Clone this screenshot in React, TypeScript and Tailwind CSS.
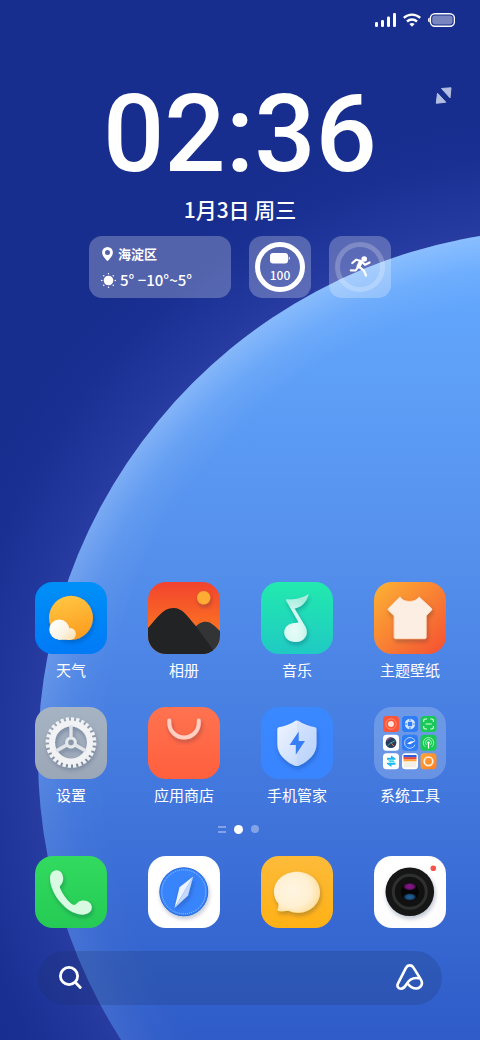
import type { ReactNode } from "react";

function Wallpaper() {
  return (
    <svg
      className="absolute inset-0 -z-10 h-full w-full"
      viewBox="0 0 480 1040"
      preserveAspectRatio="xMidYMid slice"
      aria-hidden="true"
    >
      <defs>
        <radialGradient id="halo" gradientUnits="userSpaceOnUse" cx="565" cy="756" r="640">
          <stop offset="0.82" stopColor="#283ca2" />
          <stop offset="0.88" stopColor="#20369b" />
          <stop offset="0.94" stopColor="#1a3092" />
          <stop offset="1" stopColor="#182e8f" />
        </radialGradient>
        <linearGradient id="planet" gradientUnits="userSpaceOnUse" x1="0" y1="250" x2="0" y2="1040">
          <stop offset="0" stopColor="#65aaff" />
          <stop offset="0.4" stopColor="#548fec" />
          <stop offset="0.7" stopColor="#4176dc" />
          <stop offset="1" stopColor="#2e5bc8" />
        </linearGradient>
        <radialGradient id="rim" gradientUnits="userSpaceOnUse" cx="565" cy="756" r="527">
          <stop offset="0.87" stopColor="#fff" stopOpacity="0" />
          <stop offset="0.94" stopColor="#fff" stopOpacity="0.08" />
          <stop offset="1" stopColor="#fff" stopOpacity="0.24" />
        </radialGradient>
        <linearGradient id="rimFade" x1="0" y1="0" x2="0" y2="1">
          <stop offset="0" stopColor="#fff" />
          <stop offset="0.4" stopColor="#fff" />
          <stop offset="0.8" stopColor="#555" />
        </linearGradient>
        <mask id="rimMask">
          <rect width="480" height="1040" fill="url(#rimFade)" />
        </mask>
      </defs>
      <rect width="480" height="1040" fill="url(#halo)" />
      <circle cx="565" cy="756" r="527" fill="url(#planet)" />
      <circle cx="565" cy="756" r="527" fill="url(#rim)" mask="url(#rimMask)" />
    </svg>
  );
}

function StatusBar() {
  return (
    <div className="flex h-10 items-center justify-end gap-[7px] pr-[25px]">
      <svg width="21" height="14" viewBox="0 0 21 14" fill="#fff" aria-label="信号">
        <rect x="0" y="9" width="3" height="5" rx="1.2" />
        <rect x="6" y="7" width="3" height="7" rx="1.2" />
        <rect x="12" y="3.5" width="3" height="10.5" rx="1.2" />
        <rect x="18" y="0" width="3" height="14" rx="1.2" />
      </svg>
      <svg width="18" height="14" viewBox="0 0 18 14" fill="none" stroke="#fff" strokeWidth="2.4" aria-label="WLAN">
        <path d="M.8 4.9a12 12 0 0 1 16.4 0M4 8.5a7.4 7.4 0 0 1 10 0" />
        <path d="M6.400 11a4 4 0 0 1 5.200 0L9 13.800z" fill="#fff" stroke="none" />
      </svg>
      <svg width="27" height="14" viewBox="0 0 27 14" fill="none" aria-label="电池">
        <path d="M1.6 4.6v4.8C.2 9 0 8 0 7s.2-2 1.6-2.4z" fill="#fff" />
        <rect x="2.4" y=".8" width="24" height="12.4" rx="4.500" stroke="#fff" strokeWidth="1.4" />
        <rect x="4.2" y="2.6" width="20.4" height="8.8" rx="2.8" fill="#fff" fillOpacity=".42" />
      </svg>
    </div>
  );
}

function Widgets() {
  return (
    <div className="flex justify-center gap-[18px]">
      <div className="flex h-[62px] w-[142px] flex-col justify-center gap-1 rounded-[13px] bg-white/25 pl-3">
        <div className="flex h-[22px] items-center gap-1 text-[13px] font-bold">
          <svg width="13" height="14" viewBox="0 0 13 14" aria-hidden="true">
            <path
              fill="#fff"
              fillRule="evenodd"
              d="M6.5 0a5.4 5.4 0 0 1 5.4 5.5c0 2.8-2.4 5.6-4.4 7.8a1.3 1.3 0 0 1-2 0C3.5 11.1 1.1 8.3 1.1 5.5A5.4 5.4 0 0 1 6.5 0zm0 3.1a2.5 2.5 0 1 0 0 5 2.5 2.5 0 0 0 0-5z"
            />
          </svg>
          <span>海淀区</span>
        </div>
        <div className="flex h-[22px] items-center gap-1 text-[15px] font-medium">
          <svg width="15" height="15" viewBox="0 0 15 15" aria-hidden="true">
            <circle cx="7.5" cy="7.5" r="4.8" fill="#fff" />
            <g stroke="#fff" strokeWidth="1.4" strokeLinecap="round">
              <path d="M7.5 .7v.1M7.5 14.2v.1M.7 7.5h.1M14.2 7.5h.1M2.7 2.7l.1 .1M12.2 12.2l.1 .1M12.2 2.7l.1 .1M2.7 12.2l.1 .1" />
            </g>
          </svg>
          <span>5° −10°~5°</span>
        </div>
      </div>
      <div className="flex size-[62px] items-center justify-center rounded-[13px] bg-white/25">
        <div className="flex size-[50px] flex-col items-center justify-center rounded-full border-5 border-white">
          <svg width="20" height="11" viewBox="0 0 20 11" fill="#fff" aria-hidden="true">
            <rect x="0" y="0" width="18" height="10.5" rx="3" />
            <path d="M18.7 3.6c.9 .3 1.1 1 1.1 1.7s-.2 1.4-1.1 1.7z" />
          </svg>
          <span className="mt-1 text-[12px] leading-[14px] font-medium">100</span>
        </div>
      </div>
      <div className="size-[62px] rounded-[13px] bg-white/25">
        <svg width="62" height="62" viewBox="0 0 62 62" fill="none" aria-label="运动">
          <circle cx="31" cy="31" r="22.5" stroke="#fff" strokeOpacity=".22" strokeWidth="5" />
          <circle cx="35.2" cy="23" r="2.8" fill="#fff" />
          <g stroke="#fff" strokeWidth="2.2" strokeLinecap="round" strokeLinejoin="round">
            <path d="M23.3 27l4-3.300 5 1.400M33 26l3 2.800 4.600-2.400" />
            <path d="M29.7 30.500l5 3.800 2.300 5.200M28.700 31.500l-2 3-4.900-.2" />
            <path d="M31.5 26.5l-2 4" strokeWidth="4" />
          </g>
        </svg>
      </div>
    </div>
  );
}

type TileProps = {
  id: string;
  from: string;
  to: string;
  diagonal?: boolean;
  children: ReactNode;
};

function Tile({ id, from, to, diagonal, children }: TileProps) {
  return (
    <svg className="size-[72px]" viewBox="0 0 72 72" aria-hidden="true">
      <defs>
        <linearGradient id={id} x1="0" y1="0" x2={diagonal ? "1" : "0"} y2="1">
          <stop offset="0" stopColor={from} />
          <stop offset="1" stopColor={to} />
        </linearGradient>
        <clipPath id={`${id}-clip`}>
          <rect width="72" height="72" rx="18" />
        </clipPath>
        <filter id={`${id}-shadow`} x="-30%" y="-30%" width="160%" height="170%">
          <feDropShadow dx="1" dy="2.5" stdDeviation="2" floodColor="#00204a" floodOpacity="0.28" />
        </filter>
      </defs>
      <g clipPath={`url(#${id}-clip)`}>
        <rect width="72" height="72" fill={`url(#${id})`} />
        {children}
      </g>
    </svg>
  );
}

function WeatherIcon() {
  return (
    <Tile id="weather" from="#0090f8" to="#007af6">
      <defs>
        <linearGradient id="sun" x1="0" y1="0" x2=".3" y2="1">
          <stop offset="0" stopColor="#ffca44" />
          <stop offset="1" stopColor="#fd9f22" />
        </linearGradient>
        <linearGradient id="cloud" gradientUnits="userSpaceOnUse" x1="18" y1="38" x2="40" y2="60">
          <stop offset="0" stopColor="#fff" />
          <stop offset=".5" stopColor="#fbf4e6" />
          <stop offset="1" stopColor="#fbdca4" />
        </linearGradient>
      </defs>
      <circle cx="36" cy="35.8" r="22" fill="url(#sun)" filter="url(#weather-shadow)" />
      <g fill="url(#cloud)">
        <circle cx="24.3" cy="47.6" r="10" />
        <circle cx="35" cy="52" r="5.9" />
        <rect x="23" y="48" width="12" height="9.8" />
      </g>
    </Tile>
  );
}

function PhotosIcon() {
  return (
    <Tile id="photos" from="#f2432f" to="#ff8a1a">
      <circle cx="55.7" cy="15.7" r="6.7" fill="#ffac35" filter="url(#photos-shadow)" />
      <path d="M46 46c5-5 8-6.300 12-6.300S66 43 72 49v23H40z" fill="#333435" />
      <path d="M-1 47C8 38 14 26 25.3 26 35 26 39 34 47 43l22 30H-1z" fill="#222325" />
    </Tile>
  );
}

function MusicIcon() {
  return (
    <Tile id="music" from="#22eaae" to="#1fcac3">
      <defs>
        <radialGradient id="note" cx=".4" cy=".75" r=".7">
          <stop offset="0" stopColor="#e8fcf8" />
          <stop offset=".5" stopColor="#d5f8f1" />
          <stop offset="1" stopColor="#a6eddd" />
        </radialGradient>
      </defs>
      <path
        d="M26 17.300C35 18 42 15.500 47.800 12 45.500 20 41 25 33.500 26.600L44.600 45c2 4 1.600 7.500-.2 10-2 3.200-5.500 5-9.700 5C28 60 23.200 56 23.200 50.500S28 41 34 41c1.700 0 2.800-.3 3.500-1L25 18.600q-.6-1.300 1-1.300z"
        fill="url(#note)"
        filter="url(#music-shadow)"
      />
    </Tile>
  );
}

function ThemeIcon() {
  return (
    <Tile id="theme" from="#fcb334" to="#f54f32" diagonal>
      <path
        d="M26 14.900C29 21 42 21 45 14.900L57.300 26.300q.9 1 .1 1.900l-5.300 5.600v21.400q0 1.400-1.400 1.400H21.600q-1.400 0-1.400-1.400V33.800l-5.700-5.600q-.9-1 .1-1.900z"
        fill="#fdeee4"
        stroke="#ffe1cb"
        strokeWidth="1"
        strokeLinejoin="round"
        filter="url(#theme-shadow)"
      />
    </Tile>
  );
}

function SettingsIcon() {
  return (
    <Tile id="settings" from="#a5b3c2" to="#9ba7b7">
      <g fill="none" stroke="#f1f2f4" filter="url(#settings-shadow)">
        <circle cx="36" cy="35.5" r="23.3" strokeWidth="4" pathLength="56" strokeDasharray="1.2 .8" />
        <circle cx="36" cy="35.5" r="19" strokeWidth="6" />
        <circle cx="36" cy="35.5" r="4.4" strokeWidth="3" stroke="#e6e9ed" />
        <path d="M36 30.500V18M31.700 38L21 44M40.300 38L51 44" strokeWidth="3.2" stroke="#e1e4e9" />
      </g>
    </Tile>
  );
}

function StoreIcon() {
  return (
    <Tile id="store" from="#ff7350" to="#ff5f3d">
      <path
        d="M21.300 13.500v2.500a14.700 14.500 0 0 0 29.500 0v-2.500"
        fill="none"
        stroke="#ffcfc4"
        strokeWidth="4"
        strokeLinecap="round"
        filter="url(#store-shadow)"
      />
    </Tile>
  );
}

function SecurityIcon() {
  return (
    <Tile id="security" from="#3a88ff" to="#3984ff">
      <defs>
        <linearGradient id="shield" x1="0" y1="0" x2="1" y2="1">
          <stop offset="0" stopColor="#f1f6ff" />
          <stop offset="1" stopColor="#bcd3fc" />
        </linearGradient>
      </defs>
      <path
        d="M34.400 13.800q1.400-.6 2.800 0C42 17 48 19.300 54 20.200q1.500.3 1.500 2V37c0 10-8 17.500-17.800 21.700q-1.900.8-3.800 0C24 54.500 16.300 47 16.300 37V22.200q0-1.700 1.500-2C24 19.300 30 17 34.400 13.800z"
        fill="url(#shield)"
        filter="url(#security-shadow)"
      />
      <path d="M36 13.500c6 3.500 12 5.800 19.500 7V37C55.500 48 46 56 36 59.200z" fill="#8db5fb" fillOpacity=".14" />
      <path d="M37.700 24.500L28.600 38h6.200v9.800L44 34h-6.300z" fill="#377ff3" />
    </Tile>
  );
}

function ToolsIcon() {
  return (
    <svg className="size-[72px]" viewBox="0 0 72 72" fill="none" aria-hidden="true">
      <defs>
        <linearGradient id="recorder" x1="0" y1="0" x2="1" y2="1">
          <stop stopColor="#ffa63a" />
          <stop offset="1" stopColor="#fb7e24" />
        </linearGradient>
      </defs>
      <rect width="72" height="72" rx="18" fill="#fff" fillOpacity=".2" />

      <rect x="9" y="9" width="16" height="16" rx="3.5" fill="#fd5538" />
      <circle cx="17" cy="17" r="5.2" stroke="#ff9b83" strokeWidth=".8" />
      <circle cx="17" cy="17" r="3" fill="#ffe2da" />

      <rect x="28" y="9" width="16" height="16" rx="3.5" fill="#2f7df5" />
      <circle cx="36" cy="17" r="5.2" fill="#d5e6ff" />
      <rect x="33.8" y="14.8" width="4.400" height="4.400" rx="1" fill="#2f7df5" />
      <path d="M36 11.800v2.200M36 20v2.200M30.800 17h2.200M39 17h2.200" stroke="#2f7df5" strokeWidth="1" />

      <rect x="46.5" y="9" width="16" height="16" rx="3.5" fill="#18ca55" />
      <path
        d="M49.700 15v-1.500q0-1.500 1.500-1.500H53M56.300 12h1.600q1.500 0 1.500 1.500V15M59.400 19v1.500q0 1.500-1.500 1.500h-1.600M53 22h-1.800q-1.500 0-1.500-1.500V19M51.500 17h6.200"
        stroke="#d9ffe6"
        strokeWidth="1.2"
      />

      <rect x="9" y="27.7" width="16" height="16" rx="3.5" fill="#fff" />
      <circle cx="17" cy="35.7" r="5.4" fill="#293c5e" />
      <path d="M12.800 33.500a5 5 0 0 1 4-2.700" stroke="#8f4d8c" strokeWidth="1.5" />
      <path d="M17 35.700l4.200-2M17 35.700l-3.500 3" stroke="#3aa7a0" />
      <path d="M17 35.700l3 3.600" stroke="#e2713e" />

      <rect x="28" y="27.7" width="16" height="16" rx="3.5" fill="#2f7df5" />
      <path d="M41 34a5.400 5.400 0 1 0 0 3.800" stroke="#b9d5ff" />
      <path d="M33 36.500l3 .8 5.500-3.400-5 .7z" fill="#fff" />

      <rect x="46.5" y="27.7" width="16" height="16" rx="3.5" fill="#18ca55" />
      <path d="M51.300 39.900a5.200 5.200 0 1 1 6.400 0M52.600 37.900a3 3 0 1 1 3.800 0" stroke="#b5f5c9" strokeWidth=".9" />
      <circle cx="54.5" cy="35.6" r="1.2" fill="#fff" />
      <path d="M54.500 36V41.500" stroke="#fff" strokeWidth="1.2" />

      <rect x="9" y="46.3" width="16" height="16" rx="3.5" fill="#fff" />
      <path d="M17 48.500l4.500 3v1.300h-8.500v-2h4zM17.500 60l-4.500-3v-1.300h8.500v2h-4z" fill="#18b9f3" />
      <path d="M14 53.200h5.500l1.500 2h-5.500z" fill="#42dbe3" />

      <rect x="28" y="46.3" width="16" height="16" rx="3.5" fill="#fff" />
      <path d="M29.500 48h13v2.500h-13z" fill="#315dd8" />
      <path d="M29.500 50.200h13v2.300h-13z" fill="#ee4434" />
      <path d="M29.500 52.500h13v2h-13z" fill="#ffa52d" />
      <path d="M29.500 54.500h13v6h-13z" fill="#f4efe5" />

      <rect x="46.5" y="46.3" width="16" height="16" rx="3.5" fill="url(#recorder)" />
      <circle cx="54.5" cy="54.3" r="4.3" stroke="#fff1df" strokeWidth="1.7" />
    </svg>
  );
}

function PhoneIcon() {
  return (
    <Tile id="phone" from="#32da5f" to="#25cb54">
      <path
        d="M21.500 14.200c-4 0-6.700 3.600-6.500 8.300.3 8 4.500 17 10.300 23.600C31 52.800 38 57.700 45.500 58.600c6.500.6 11.300-2.400 11.300-7 0-4-3.500-7-8.300-7-4.500 0-6 2.400-7.600 3.700-1.700 1.300-3.200.8-5-.7-4.600-4-8.300-9.600-10.500-14.500-.9-2-.7-3 .3-4.100 1.500-1.700 2.600-3.800 2.400-7.300-.2-4.500-2.900-7.500-6.600-7.500z"
        fill="#d9fae2"
        filter="url(#phone-shadow)"
      />
    </Tile>
  );
}

function BrowserIcon() {
  return (
    <Tile id="browser" from="#ffffff" to="#ffffff">
      <circle cx="35.8" cy="35.8" r="24.3" fill="#3784fa" filter="url(#browser-shadow)" />
      <circle cx="35.8" cy="35.8" r="24" fill="none" stroke="#2a67d3" strokeWidth=".8" />
      <circle cx="35.8" cy="35.8" r="22" fill="none" stroke="#b9d5ff" strokeWidth=".8" strokeDasharray="1 1" />
      <g filter="url(#browser-shadow)">
        <path d="M45.200 20.500L31.500 31.300 26.500 52z" fill="#eef4ff" />
        <path d="M45.200 20.500L40 39.500 26.500 52z" fill="#c5d9fb" />
      </g>
    </Tile>
  );
}

function MessagesIcon() {
  return (
    <Tile id="messages" from="#fdbb3a" to="#ffb114">
      <defs>
        <radialGradient id="bubble" cx=".4" cy=".45" r=".62">
          <stop offset="0" stopColor="#fff5e2" />
          <stop offset=".65" stopColor="#fff0d2" />
          <stop offset="1" stopColor="#ffdf9d" />
        </radialGradient>
      </defs>
      <path
        d="M36 15.800c12.800 0 23 8.800 23 20.400S49 56.800 36.600 56.800c-3.300 0-6.400-.7-9.300-2-3.300.5-6.600.4-9.700.1-1.200-.2-1.400-1-.9-2 .8-1.600 1-3.600.6-5.400-2.700-3.300-4.300-7.200-4.300-11.300 0-11.600 10.200-20.400 23-20.400z"
        fill="url(#bubble)"
        filter="url(#messages-shadow)"
      />
    </Tile>
  );
}

function CameraIcon() {
  return (
    <Tile id="camera" from="#ffffff" to="#fdfdfd">
      <defs>
        <radialGradient id="lensTop">
          <stop offset="0" stopColor="#8d128d" />
          <stop offset=".6" stopColor="#741477" />
          <stop offset="1" stopColor="#2b0c30" />
        </radialGradient>
        <radialGradient id="lensBottom">
          <stop offset="0" stopColor="#1f6398" />
          <stop offset=".6" stopColor="#1b5080" />
          <stop offset="1" stopColor="#0e1c2c" />
        </radialGradient>
      </defs>
      <circle cx="35.8" cy="35.8" r="24.3" fill="#141414" filter="url(#camera-shadow)" />
      <circle cx="35.8" cy="35.8" r="16.5" fill="#111" stroke="#2e3030" strokeWidth="3" />
      <circle cx="35.8" cy="35.8" r="9" fill="#060606" />
      <ellipse cx="35.8" cy="30.6" rx="6.2" ry="3.6" fill="url(#lensTop)" />
      <ellipse cx="35.8" cy="41" rx="6.2" ry="3.6" fill="url(#lensBottom)" />
      <circle cx="59.3" cy="12.3" r="2.8" fill="#f5534b" />
    </Tile>
  );
}

const apps = [
  { name: "天气", icon: <WeatherIcon /> },
  { name: "相册", icon: <PhotosIcon /> },
  { name: "音乐", icon: <MusicIcon /> },
  { name: "主题壁纸", icon: <ThemeIcon /> },
  { name: "设置", icon: <SettingsIcon /> },
  { name: "应用商店", icon: <StoreIcon /> },
  { name: "手机管家", icon: <SecurityIcon /> },
  { name: "系统工具", icon: <ToolsIcon /> },
];

const dock = [
  { name: "电话", icon: <PhoneIcon /> },
  { name: "浏览器", icon: <BrowserIcon /> },
  { name: "短信", icon: <MessagesIcon /> },
  { name: "相机", icon: <CameraIcon /> },
];

function PageDots() {
  return (
    <div className="flex h-4 items-center justify-center gap-2 pr-1">
      <span className="flex flex-col gap-[3px]">
        <i className="h-[2px] w-2 bg-white/35" />
        <i className="h-[2px] w-2 bg-white/35" />
      </span>
      <span className="size-[9px] rounded-full bg-white" />
      <span className="size-2 rounded-full bg-white/35" />
    </div>
  );
}

function SearchBar() {
  return (
    <form className="mx-[38px] flex h-[54px] items-center rounded-full bg-[#182d5c]/20 px-[18px]">
      <button type="submit" aria-label="搜索">
        <svg width="28" height="28" viewBox="0 0 28 28" fill="none" stroke="#fff" strokeWidth="2.8" strokeLinecap="round">
          <circle cx="13" cy="12" r="8.6" />
          <path d="M19.500 18.500l4.800 5" />
        </svg>
      </button>
      <input type="text" aria-label="搜索" className="min-w-0 flex-1 bg-transparent px-3 text-base outline-none" />
      <button type="button" aria-label="语音助手">
        <svg width="28" height="28" viewBox="0 0 28 28" fill="none" stroke="#fff" strokeWidth="2.6" strokeLinecap="round" strokeLinejoin="round">
          <path d="M24.300 14.600C18.500 13 13.600 15.200 10.800 19.600 9.300 22 8.400 24.700 5 24.700c-2.700 0-4.300-2.300-3.200-4.800L9.800 4.100c2-3.600 6-3.600 8 0l6.800 11c3.300 5-.2 9.500-4.300 9.400-4 0-6.300-1.900-8.300-4.500" />
        </svg>
      </button>
    </form>
  );
}

export default function App() {
  return (
    <main className="relative isolate flex min-h-screen flex-col overflow-hidden bg-[#182e8f] font-['Noto_Sans_CJK_SC',sans-serif] text-white">
      <Wallpaper />
      <StatusBar />

      <button type="button" aria-label="展开" className="absolute top-[87px] right-[27px]">
        <svg width="18" height="18" viewBox="0 0 18 18" fill="#b4bee2" stroke="#b4bee2" strokeLinejoin="round" aria-hidden="true">
          <path d="M6.500 1.500L16 .8 15 10.800z" />
          <path d="M2.500 6.200L10.800 15.200 1.300 16.300z" />
        </svg>
      </button>

      <header className="pt-[34px] text-center">
        <h1 className="font-[Roboto,sans-serif] text-[108px] leading-[120px] font-medium">02:36</h1>
        <p className="text-[21px] leading-[30px] font-medium">1月3日 周三</p>
      </header>

      <div className="mt-3">
        <Widgets />
      </div>

      <div className="mt-auto">
        <div className="grid grid-cols-[repeat(4,72px)] justify-between gap-y-[25px] pr-[34px] pl-[35px]">
          {apps.map((app) => (
            <button key={app.name} type="button" className="flex flex-col items-center gap-[3px]">
              {app.icon}
              <span className="text-[15px] leading-[25px] whitespace-nowrap">{app.name}</span>
            </button>
          ))}
        </div>

        <div className="mt-[14px]">
          <PageDots />
        </div>

        <div className="mt-[19px] flex justify-between pr-[34px] pl-[35px]">
          {dock.map((app) => (
            <button key={app.name} type="button" aria-label={app.name}>
              {app.icon}
            </button>
          ))}
        </div>

        <div className="pt-[23px] pb-[35px]">
          <SearchBar />
        </div>
      </div>
    </main>
  );
}
